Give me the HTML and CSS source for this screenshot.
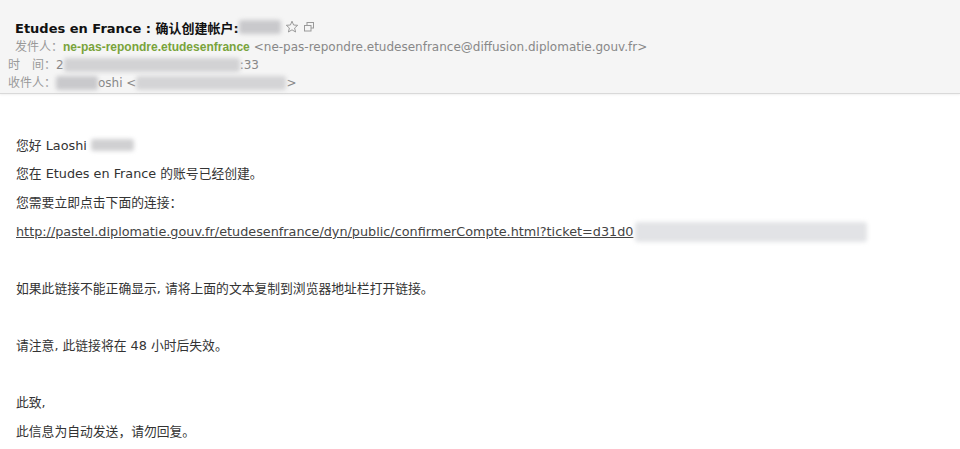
FILE: index.html
```html
<!DOCTYPE html>
<html lang="zh">
<head>
<meta charset="utf-8">
<link rel="stylesheet" href="styles.css">
</head>
<body>
<div class="header">
  <div class="title">Etudes en France : 确认创建帐户: <span class="blur blur-title"></span><span class="icons"><svg width="14" height="14" viewBox="0 0 14 14"><path d="M7 1.2 L8.6 5 L12.7 5.3 L9.6 8 L10.6 12 L7 9.8 L3.4 12 L4.4 8 L1.3 5.3 L5.4 5 Z" fill="none" stroke="#9a9a9a" stroke-width="1"/></svg><svg width="12" height="12" viewBox="0 0 12 12"><rect x="4" y="1.5" width="6.5" height="5.5" fill="none" stroke="#9a9a9a" stroke-width="1"/><rect x="1.5" y="4.5" width="6.5" height="5.5" fill="#f5f5f5" stroke="#9a9a9a" stroke-width="1"/></svg></span></div>
  <div class="row from"><span class="label">发件人：</span><span class="sender">ne-pas-repondre.etudesenfrance</span> <span class="addr">&lt;ne-pas-repondre.etudesenfrance@diffusion.diplomatie.gouv.fr&gt;</span></div>
  <div class="row"><span class="label">时　间：</span><span class="addr">2</span><span class="blur blur-date"></span><span class="addr">:33</span></div>
  <div class="row"><span class="label">收件人：</span><span class="blur blur-to1"></span><span class="addr">oshi &lt;</span><span class="blur blur-to2"></span><span class="addr">&gt;</span></div>
</div>
<div class="content">
  <p class="first">您好 Laoshi <span class="blur blur-name"></span></p>
  <p>您在 Etudes en France 的账号已经创建。</p>
  <p>您需要立即点击下面的连接：</p>
  <p class="linkline"><a href="#" class="link">http://pastel.diplomatie.gouv.fr/etudesenfrance/dyn/public/confirmerCompte.html?ticket=d31d0</a><span class="blur blur-link"></span></p>
  <p class="gap">如果此链接不能正确显示, 请将上面的文本复制到浏览器地址栏打开链接。</p>
  <p class="gap">请注意, 此链接将在 48 小时后失效。</p>
  <p class="gap">此致,</p>
  <p>此信息为自动发送，请勿回复。</p>
</div>
</body>
</html>
```
FILE: styles.css
```css
html, body {
  margin: 0;
  padding: 0;
  background: #ffffff;
}
body {
  width: 960px;
  height: 449px;
  overflow: hidden;
  font-family: "DejaVu Sans", "Noto Sans CJK SC", sans-serif;
  color: #333333;
}
.header {
  background: #f5f5f5;
  height: 94px;
  border-bottom: 1px solid #d9d9d9;
  box-shadow: 0 1px 2px rgba(0,0,0,0.06);
  padding: 0 0 0 8px;
  box-sizing: border-box;
}
.title {
  padding: 17px 0 0 7px;
  height: 20px;
  font-size: 13px;
  font-weight: bold;
  color: #111;
  display: flex;
  align-items: center;
  white-space: nowrap;
}
.icons {
  display: inline-flex;
  gap: 4px;
  align-items: center;
  margin-left: 4px;
}
.row {
  font-size: 12px;
  line-height: 18px;
  height: 18px;
  color: #888;
  display: flex;
  align-items: center;
  white-space: nowrap;
}
.row.from {
  margin-top: 1px;
  padding-left: 7px;
}
.label {
  color: #999;
}
.addr {
  color: #888;
}
.sender {
  font-family: "Liberation Sans", sans-serif;
  font-weight: bold;
  color: #79a33b;
  font-size: 12px;
  margin-right: 4px;
}
.blur {
  display: inline-block;
  background: #c9c9cc;
  filter: blur(2px);
  border-radius: 3px;
}
.blur-title { width: 42px; height: 14px; }
.blur-date { width: 176px; height: 14px; background: #d2d2d4; }
.blur-to1 { width: 42px; height: 14px; }
.blur-to2 { width: 150px; height: 14px; background: #d4d4d6; }
.blur-name { width: 43px; height: 12px; vertical-align: -1px; background: #d0d0d2; }
.blur-link { width: 232px; height: 20px; vertical-align: -6px; background: #e2e3e6; margin-left: 2px; }
.content {
  padding: 39px 0 0 16px;
  font-size: 12.8px;
}
.content p {
  margin: 0;
  line-height: 29px;
  height: 29px;
  white-space: nowrap;
}
.content p.first {
  height: 26px;
  line-height: 26px;
}
.content p.gap {
  margin-top: 28px;
}
.link {
  color: #444;
  text-decoration: underline;
}
```
